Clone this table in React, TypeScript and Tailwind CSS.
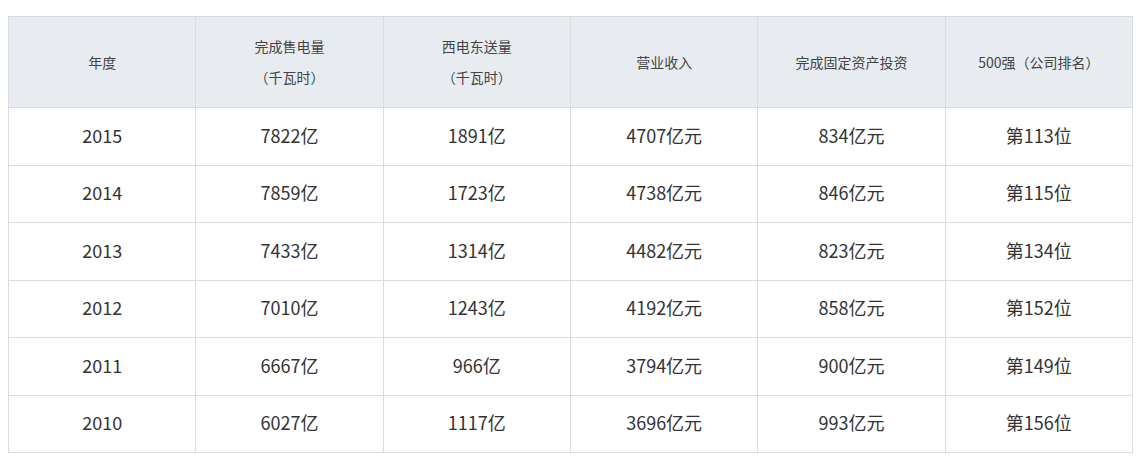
const headers: { title: string; unit?: string }[] = [
  { title: '年度' },
  { title: '完成售电量', unit: '（千瓦时）' },
  { title: '西电东送量', unit: '（千瓦时）' },
  { title: '营业收入' },
  { title: '完成固定资产投资' },
  { title: '500强（公司排名）' },
];

const rows = [
  ['2015', '7822亿', '1891亿', '4707亿元', '834亿元', '第113位'],
  ['2014', '7859亿', '1723亿', '4738亿元', '846亿元', '第115位'],
  ['2013', '7433亿', '1314亿', '4482亿元', '823亿元', '第134位'],
  ['2012', '7010亿', '1243亿', '4192亿元', '858亿元', '第152位'],
  ['2011', '6667亿', '966亿', '3794亿元', '900亿元', '第149位'],
  ['2010', '6027亿', '1117亿', '3696亿元', '993亿元', '第156位'],
];

export default function App() {
  return (
    <div
      className="w-[1140px] h-[458px] overflow-hidden bg-white pt-[16px] pl-[8px]"
      style={{ fontFamily: '"Microsoft YaHei", "Noto Sans CJK SC", sans-serif' }}
    >
      <table className="w-[1125px] table-fixed border-collapse">
        <thead>
          <tr className="h-[91px] bg-[#e8ecf0]">
            {headers.map((h) => (
              <th key={h.title} className="border border-[#d9dcdf] font-normal text-[14px] text-[#444] text-center align-middle">
                <div className="leading-[31px]">{h.title}</div>
                {h.unit && <div className="leading-[31px]">{h.unit}</div>}
              </th>
            ))}
          </tr>
        </thead>
        <tbody>
          {rows.map((r) => (
            <tr key={r[0]} className="h-[57.5px]">
              {r.map((c, i) => (
                <td key={i} className="border border-[#d9dcdf] text-center align-middle text-[18px] text-[#333] pb-[2px]">
                  {c}
                </td>
              ))}
            </tr>
          ))}
        </tbody>
      </table>
    </div>
  );
}
